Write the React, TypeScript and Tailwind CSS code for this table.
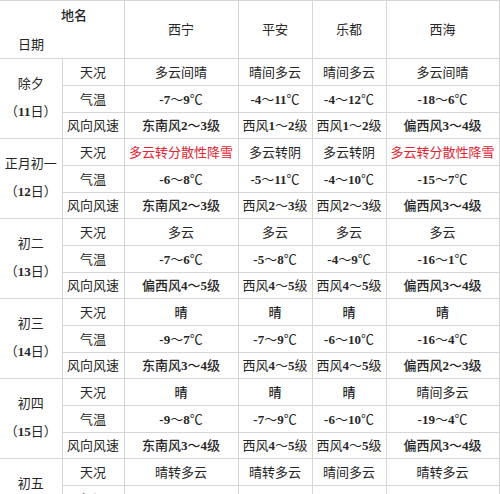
import React from 'react';

type Cell = { text: string; red?: boolean; bold?: boolean };

type Day = {
  name: string;
  date: string;
  sky: Cell[];
  temp: string[];
  wind: Cell[];
};

const days: Day[] = [
  {
    name: '除夕',
    date: '11',
    sky: [{ text: '多云间晴' }, { text: '晴间多云' }, { text: '晴间多云' }, { text: '多云间晴' }],
    temp: ['-7～9℃', '-4～11℃', '-4～12℃', '-18～6℃'],
    wind: [
      { text: '东南风2～3级', bold: true },
      { text: '西风1～2级' },
      { text: '西风1～2级' },
      { text: '偏西风3～4级', bold: true },
    ],
  },
  {
    name: '正月初一',
    date: '12',
    sky: [
      { text: '多云转分散性降雪', red: true },
      { text: '多云转阴' },
      { text: '多云转阴' },
      { text: '多云转分散性降雪', red: true },
    ],
    temp: ['-6～8℃', '-5～11℃', '-4～10℃', '-15～7℃'],
    wind: [
      { text: '东南风2～3级', bold: true },
      { text: '西风2～3级' },
      { text: '西风2～3级' },
      { text: '偏西风3～4级', bold: true },
    ],
  },
  {
    name: '初二',
    date: '13',
    sky: [{ text: '多云' }, { text: '多云' }, { text: '多云' }, { text: '多云' }],
    temp: ['-7～6℃', '-5～8℃', '-4～9℃', '-16～1℃'],
    wind: [
      { text: '偏西风4～5级', bold: true },
      { text: '西风4～5级' },
      { text: '西风4～5级' },
      { text: '偏西风3～4级', bold: true },
    ],
  },
  {
    name: '初三',
    date: '14',
    sky: [{ text: '晴', bold: true }, { text: '晴', bold: true }, { text: '晴', bold: true }, { text: '晴', bold: true }],
    temp: ['-9～7℃', '-7～9℃', '-6～10℃', '-16～4℃'],
    wind: [
      { text: '东南风3～4级', bold: true },
      { text: '西风4～5级' },
      { text: '西风4～5级' },
      { text: '偏西风2～3级', bold: true },
    ],
  },
  {
    name: '初四',
    date: '15',
    sky: [{ text: '晴', bold: true }, { text: '晴', bold: true }, { text: '晴', bold: true }, { text: '晴间多云' }],
    temp: ['-9～8℃', '-7～9℃', '-6～10℃', '-19～4℃'],
    wind: [
      { text: '东南风3～4级', bold: true },
      { text: '西风4～5级' },
      { text: '西风4～5级' },
      { text: '偏西风3～4级', bold: true },
    ],
  },
  {
    name: '初五',
    date: '16',
    sky: [{ text: '晴转多云' }, { text: '晴转多云' }, { text: '晴间多云' }, { text: '晴转多云' }],
    temp: ['-11～7℃', '-8～11℃', '-7～11℃', '-16～4℃'],
    wind: [
      { text: '东南风2～3级', bold: true },
      { text: '西风3～4级' },
      { text: '西风3～4级' },
      { text: '偏西风3～4级', bold: true },
    ],
  },
];

const places = ['西宁', '平安', '乐都', '西海'];

const td = 'border border-[#d6d6d6] text-center align-middle p-0';

// digits and minus signs in bold serif, the rest as given
const Mixed = ({ text, strong }: { text: string; strong?: boolean }) => {
  const parts = text.split(/([-0-9]+)/).filter(Boolean);
  return (
    <>
      {parts.map((p, i) =>
        /^[-0-9]+$/.test(p) ? (
          <b key={i} className="font-bold">
            {p}
          </b>
        ) : (
          <span key={i} className={strong ? 'font-medium' : 'font-normal'}>
            {p}
          </span>
        )
      )}
    </>
  );
};

const App = () => {
  return (
    <div className="w-[500px] h-[494px] overflow-hidden bg-white">
      <table
        className="w-[499px] table-fixed border-collapse text-[13px] leading-none text-[#262626]"
        style={{ fontFamily: '"Liberation Serif", "Noto Sans CJK SC", serif' }}
      >
        <colgroup>
          <col className="w-[62px]" />
          <col className="w-[62px]" />
          <col className="w-[114px]" />
          <col className="w-[74px]" />
          <col className="w-[74px]" />
          <col className="w-[113px]" />
        </colgroup>
        <tbody>
          {/* header */}
          <tr className="h-[57px]">
            <td colSpan={2} className={`${td} border-l-0`}>
              <div className="flex flex-col h-[57px]">
                <div className="pt-[8px] pl-[61px] text-left font-medium">地名</div>
                <div className="pt-[16px] pl-[18px] text-left">日期</div>
              </div>
            </td>
            {places.map((p) => (
              <td key={p} className={td}>
                {p}
              </td>
            ))}
          </tr>

          {days.map((d) => (
            <React.Fragment key={d.date}>
              <tr className="h-[27px]">
                <td rowSpan={3} className={`${td} border-l-0`}>
                  <div className="flex flex-col items-center gap-[15px] pb-[2px]">
                    <span>{d.name}</span>
                    <span>
                      （<b>{d.date}</b>日）
                    </span>
                  </div>
                </td>
                <td className={td}>天况</td>
                {d.sky.map((c, i) => (
                  <td key={i} className={`${td} ${c.red ? 'text-[#e2232f]' : ''} ${c.bold ? 'font-medium' : ''}`}>
                    {c.text}
                  </td>
                ))}
              </tr>
              <tr className="h-[27px]">
                <td className={td}>气温</td>
                {d.temp.map((t, i) => (
                  <td key={i} className={td}>
                    <Mixed text={t} />
                  </td>
                ))}
              </tr>
              <tr className="h-[26px]">
                <td className={td}>风向风速</td>
                {d.wind.map((c, i) => (
                  <td key={i} className={td}>
                    <Mixed text={c.text} strong={c.bold} />
                  </td>
                ))}
              </tr>
            </React.Fragment>
          ))}
        </tbody>
      </table>
    </div>
  );
};

export default App;
